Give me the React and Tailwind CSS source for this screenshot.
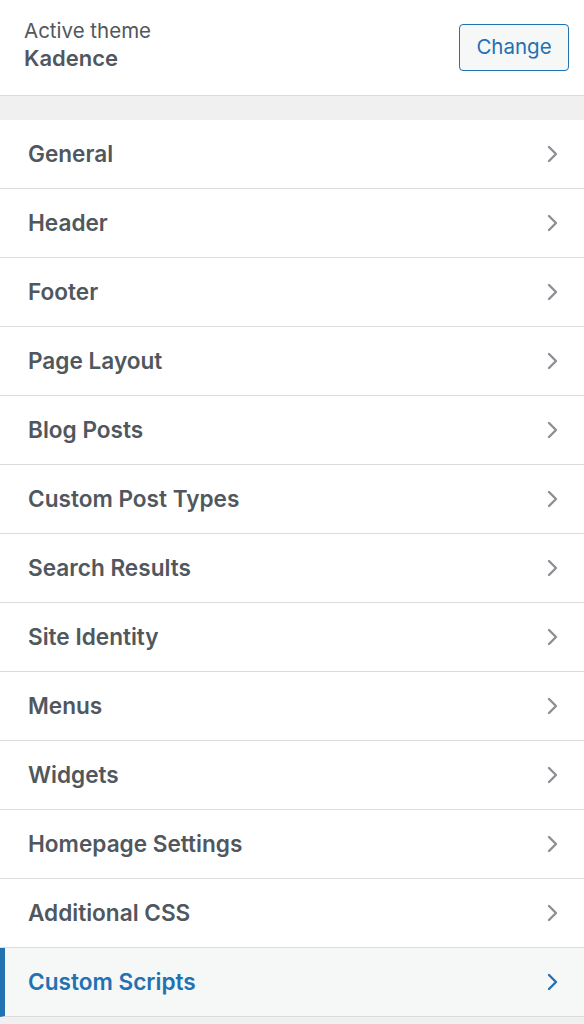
import React from 'react';

const sections = [
    'General',
    'Header',
    'Footer',
    'Page Layout',
    'Blog Posts',
    'Custom Post Types',
    'Search Results',
    'Site Identity',
    'Menus',
    'Widgets',
    'Homepage Settings',
    'Additional CSS',
];

function Chevron({ className }) {
    return (
        <svg width="14" height="20" viewBox="0 0 14 20" className={className} fill="none">
            <polyline points="3,3 10,10 3,17" stroke="currentColor" strokeWidth="2.4" strokeLinecap="round" strokeLinejoin="round" />
        </svg>
    );
}

export default function App() {
    return (
        <div className="w-[584px] h-[1024px] overflow-hidden bg-[#f0f0f1] font-['Inter',sans-serif]">
            {/* Theme header */}
            <div className="h-[96px] bg-white border-b border-[#dcdcde] flex items-center justify-between pl-6 pr-[15px]">
                <div className="flex flex-col -mt-1">
                    <span className="text-[20.5px] leading-[26px] text-[#50575e]">Active theme</span>
                    <span className="text-[22px] leading-[29px] font-semibold text-[#50575e]">Kadence</span>
                </div>
                <button className="w-[110px] h-[47px] rounded-[4px] border-[1.5px] border-[#2271b1] bg-[#f6f7f7] text-[20.5px] text-[#2271b1]">
                    Change
                </button>
            </div>

            <div className="h-6" />

            {/* Section list */}
            <ul className="flex flex-col">
                {sections.map((label) => (
                    <li key={label} className="h-[69px] bg-white border-b border-[#dcdcde] flex items-center justify-between pl-7 pr-[24px]">
                        <span className="text-[22.6px] font-semibold text-[#50575e]">{label}</span>
                        <Chevron className="text-[#8c8f94]" />
                    </li>
                ))}
                <li className="h-[69px] bg-[#f6f7f7] border-b border-[#dcdcde] border-l-[5px] border-l-[#2271b1] flex items-center justify-between pl-[23px] pr-[24px]">
                    <span className="text-[22.6px] font-semibold text-[#2271b1]">Custom Scripts</span>
                    <Chevron className="text-[#2271b1]" />
                </li>
            </ul>
        </div>
    );
}
